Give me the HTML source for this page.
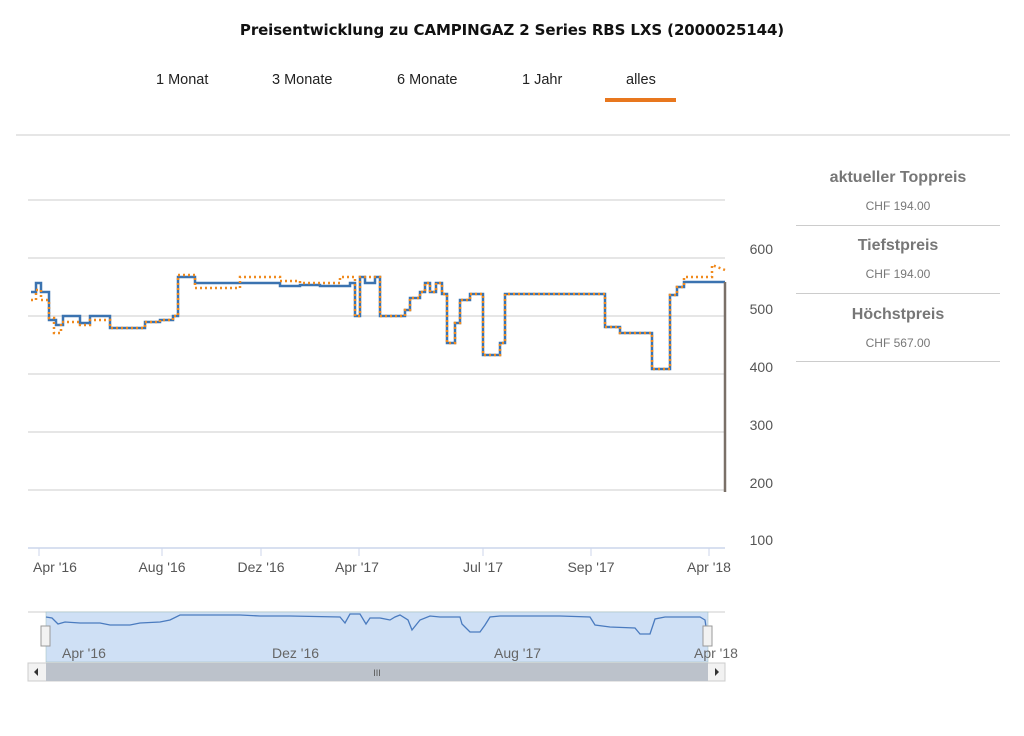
<!DOCTYPE html>
<html><head><meta charset="utf-8"><style>
body{margin:0;width:1024px;height:736px;background:#fff;font-family:"Liberation Sans",sans-serif;position:relative;overflow:hidden}
.t{position:absolute;top:21px;left:0;width:1024px;text-align:center;font-weight:bold;font-size:15px;color:#111;font-family:"DejaVu Sans",sans-serif;letter-spacing:-0.1px}
.tab{position:absolute;top:72px;font-size:14.5px;color:#222}
.side{position:absolute;left:796px;width:204px;text-align:center;color:#777}
.side b{display:block;font-size:16px;color:#777;}
.side span{display:block;font-size:12px;margin-top:12px}
.hr{position:absolute;left:796px;width:204px;height:1px;background:#ccc}
</style></head><body>
<div class="t">Preisentwicklung zu CAMPINGAZ 2 Series RBS LXS (2000025144)</div>
<div class="tab" style="left:156px">1 Monat</div>
<div class="tab" style="left:272px">3 Monate</div>
<div class="tab" style="left:397px">6 Monate</div>
<div class="tab" style="left:522px">1 Jahr</div>
<div class="tab" style="left:626px">alles</div>
<div style="position:absolute;left:605px;top:98px;width:71px;height:4px;background:#e8771e"></div>
<div style="position:absolute;left:16px;top:134px;width:994px;height:2px;background:#e6e6e6"></div>
<div class="side" style="top:169px"><b>aktueller Toppreis</b><span>CHF 194.00</span></div>
<div class="hr" style="top:225px"></div>
<div class="side" style="top:237px"><b>Tiefstpreis</b><span>CHF 194.00</span></div>
<div class="hr" style="top:293px"></div>
<div class="side" style="top:306px"><b>Höchstpreis</b><span>CHF 567.00</span></div>
<div class="hr" style="top:361px"></div>
<svg width="1024" height="736" style="position:absolute;left:0;top:0" font-family="Liberation Sans,sans-serif">
<g stroke="#ddd" stroke-width="1.5">
<line x1="28" x2="725" y1="200" y2="200"/><line x1="28" x2="725" y1="258" y2="258"/><line x1="28" x2="725" y1="316" y2="316"/><line x1="28" x2="725" y1="374" y2="374"/><line x1="28" x2="725" y1="432" y2="432"/><line x1="28" x2="725" y1="490" y2="490"/></g>
<line x1="28" x2="725" y1="548" y2="548" stroke="#ccd6eb" stroke-width="1.5"/>
<g stroke="#ccd6eb"><line x1="39" x2="39" y1="548" y2="556"/><line x1="162" x2="162" y1="548" y2="556"/><line x1="261" x2="261" y1="548" y2="556"/><line x1="359" x2="359" y1="548" y2="556"/><line x1="483" x2="483" y1="548" y2="556"/><line x1="591" x2="591" y1="548" y2="556"/><line x1="709" x2="709" y1="548" y2="556"/></g>
<g font-size="14" fill="#555" text-anchor="end"><text x="773" y="254">600</text><text x="773" y="314">500</text><text x="773" y="372">400</text><text x="773" y="430">300</text><text x="773" y="488">200</text><text x="773" y="545">100</text></g>
<g font-size="14" fill="#555" text-anchor="middle"><text x="55" y="572">Apr '16</text><text x="162" y="572">Aug '16</text><text x="261" y="572">Dez '16</text><text x="357" y="572">Apr '17</text><text x="483" y="572">Jul '17</text><text x="591" y="572">Sep '17</text><text x="709" y="572">Apr '18</text></g>
<polyline fill="none" stroke="#3b73b0" stroke-width="2.5" points="31,292 36,292 36,283 41,283 41,292 49,292 49,320 56,320 56,325 63,325 63,316 80,316 80,323 90,323 90,316 110,316 110,328 145,328 145,322 160,322 160,320 173,320 173,316 178,316 178,277 195,277 195,283 280,283 280,286 300,286 300,285 320,285 320,286 350,286 350,283 355,283 355,316 360,316 360,277 365,277 365,283 375,283 375,277 380,277 380,316 405,316 405,310 410,310 410,298 420,298 420,292 425,292 425,283 430,283 430,292 436,292 436,283 442,283 442,294 447,294 447,343 455,343 455,323 460,323 460,300 470,300 470,294 483,294 483,355 500,355 500,343 505,343 505,294 605,294 605,327 620,327 620,333 652,333 652,369 670,369 670,295 677,295 677,287 684,287 684,282 725,282"/>
<line x1="725" y1="282" x2="725" y2="492" stroke="#7a7068" stroke-width="2.5"/>
<polyline fill="none" stroke="#f08a1e" stroke-width="2.5" stroke-dasharray="2,3" points="31,300 36,300 36,290 41,290 41,300 49,300 49,318 54,318 54,333 61,333 61,322 80,322 80,325 90,325 90,320 110,320 110,328 145,328 145,322 160,322 160,320 173,320 173,316 178,316 178,275 195,275 195,288 240,288 240,277 280,277 280,281 300,281 300,283 340,283 340,277 355,277 355,316 360,316 360,277 380,277 380,316 405,316 405,310 410,310 410,298 420,298 420,292 425,292 425,283 430,283 430,292 436,292 436,283 442,283 442,294 447,294 447,343 455,343 455,323 460,323 460,300 470,300 470,294 483,294 483,355 500,355 500,343 505,343 505,294 605,294 605,327 620,327 620,333 652,333 652,369 670,369 670,295 677,295 677,287 684,287 684,277 712,277 712,265 725,270"/>
<line x1="28" x2="725" y1="612" y2="612" stroke="#ccc"/>
<rect x="46" y="612" width="662" height="50" fill="#cfe0f5" stroke="#9bb" stroke-width="0.5"/>
<polyline fill="none" stroke="#4a7bbf" stroke-width="1.3" points="46,617 52,618 58,624 65,622 80,623 100,623 110,625 130,625 140,623 160,622 170,620 180,615 240,615 260,616 290,616 340,617 345,623 350,614 360,614 366,624 370,618 380,618 390,620 395,617 400,615 408,620 412,630 420,620 430,616 440,617 450,617 460,617 462,624 470,632 480,632 485,625 490,617 500,616 520,616 560,616 590,617 595,625 610,627 635,628 640,634 650,634 655,619 665,617 700,617 705,620 708,640"/>
<rect x="41" y="626" width="9" height="20" fill="#f2f2f2" stroke="#999"/>
<rect x="703" y="626" width="9" height="20" fill="#f2f2f2" stroke="#999"/>
<g font-size="14" fill="#666"><text x="62" y="658">Apr '16</text><text x="272" y="658">Dez '16</text><text x="494" y="658">Aug '17</text><text x="694" y="658">Apr '18</text></g>
<rect x="28" y="663" width="697" height="18" fill="#f2f2f2" stroke="#ccc"/>
<rect x="46" y="663" width="662" height="18" fill="#bcc2cb"/>
<text x="377" y="676" font-size="9" fill="#555" text-anchor="middle">III</text>
<path d="M38,668 L34,672 L38,676Z M715,668 L719,672 L715,676Z" fill="#333"/>
</svg>
</body></html>
